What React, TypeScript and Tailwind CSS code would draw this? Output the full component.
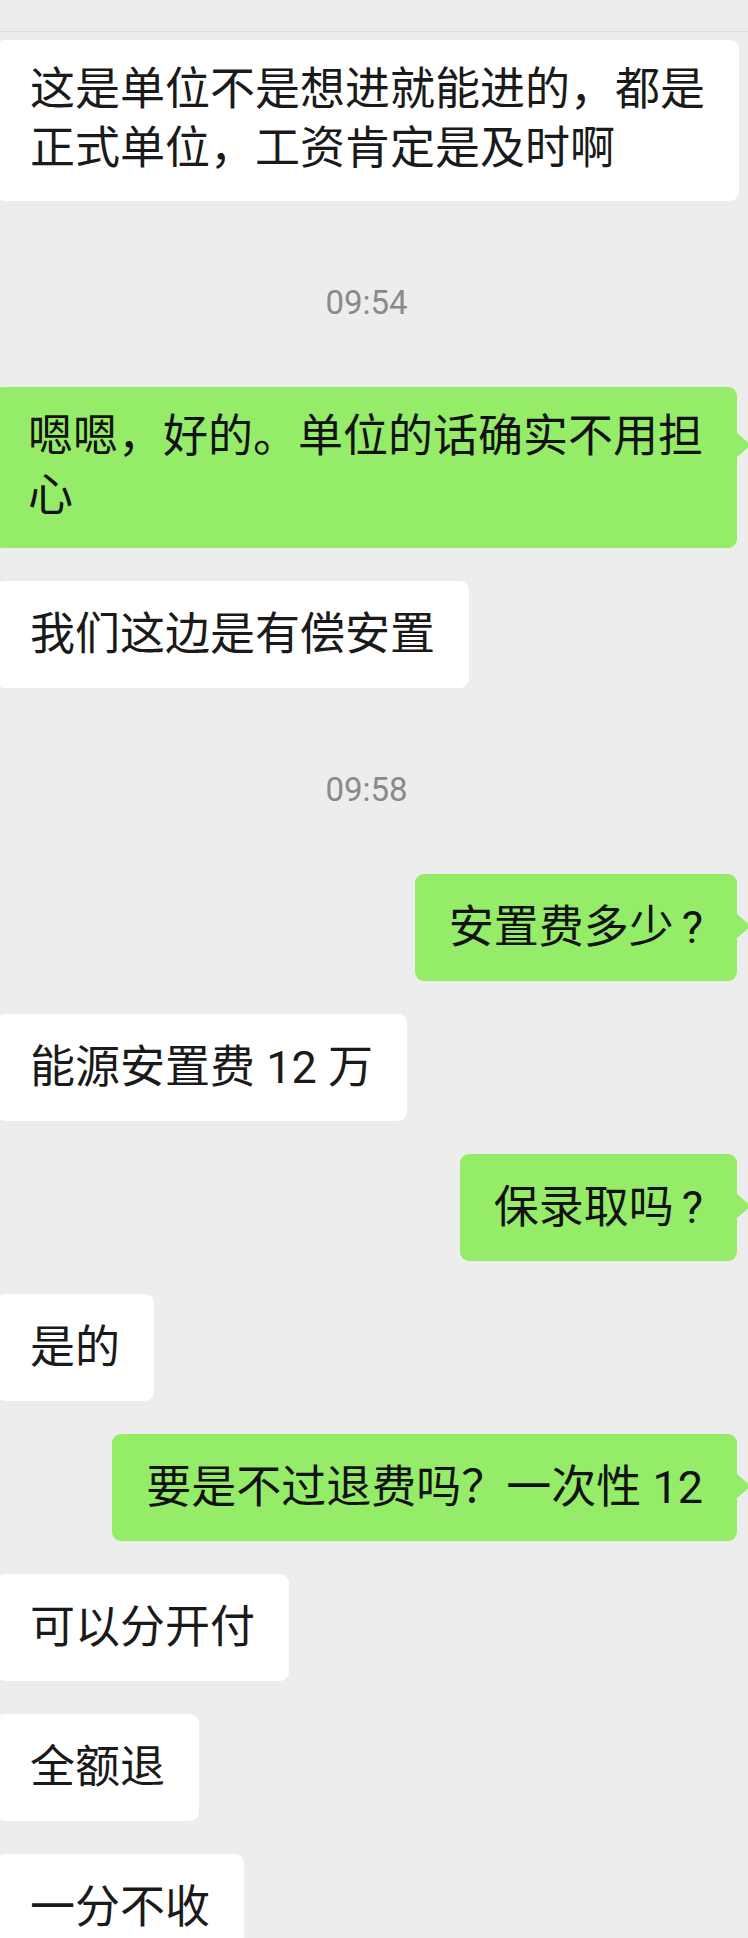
type Row =
  | { kind: "time"; text: string }
  | { kind: "in" | "out"; lines: string[]; tailTop?: string };

const rows: Row[] = [
  { kind: "in", lines: ["这是单位不是想进就能进的，都是", "正式单位，工资肯定是及时啊"] },
  { kind: "time", text: "09:54" },
  { kind: "out", lines: ["嗯嗯，好的。单位的话确实不用担", "心"], tailTop: "top-[46px]" },
  { kind: "in", lines: ["我们这边是有偿安置"] },
  { kind: "time", text: "09:58" },
  { kind: "out", lines: ["安置费多少?"] },
  { kind: "in", lines: ["能源安置费 12 万"] },
  { kind: "out", lines: ["保录取吗?"] },
  { kind: "in", lines: ["是的"] },
  { kind: "out", lines: ["要是不过退费吗？一次性 12"] },
  { kind: "in", lines: ["可以分开付"] },
  { kind: "in", lines: ["全额退"] },
  { kind: "in", lines: ["一分不收"] },
];

const textFont = "font-['Roboto','Noto_Sans_CJK_SC',sans-serif] text-[45px] leading-[59px]";

// trailing half-width "?" sits a little further out in the original font
function Line({ text }: { text: string }) {
  if (text.endsWith("?")) {
    return (
      <div className="whitespace-nowrap">
        {text.slice(0, -1)}
        <span className="ml-[8px]">?</span>
      </div>
    );
  }
  return <div className="whitespace-nowrap">{text}</div>;
}

function Bubble({ side, lines, tailTop }: { side: "in" | "out"; lines: string[]; tailTop?: string }) {
  const pad = lines.length > 1 ? "pt-[20px] pb-[23px]" : "py-[24px]";
  const body = lines.map((l) => <Line key={l} text={l} />);

  if (side === "in") {
    return (
      <div className="flex justify-start">
        <div className={`-ml-[4px] rounded-[9px] bg-white px-[34px] text-[#1a1a1a] ${pad} ${textFont}`}>
          {body}
        </div>
      </div>
    );
  }

  return (
    <div className="flex justify-end pr-[11px]">
      <div className={`relative rounded-[9px] bg-[#95ec69] px-[34px] text-[#121212] ${pad} ${textFont}`}>
        {body}
        <svg
          className={`absolute -right-[14px] ${tailTop ?? "top-[40px]"}`}
          width="14"
          height="24"
          viewBox="0 0 14 24"
        >
          <path d="M0 0 L14 12 L0 24 Z" fill="#95ec69" />
        </svg>
      </div>
    </div>
  );
}

export default function App() {
  return (
    <div className="h-[1938px] w-full overflow-hidden bg-[#ededed]">
      <div className="h-[32px] border-b border-[#dcdcdc]" />
      <div className="flex flex-col gap-[33px] pt-[8px]">
        {rows.map((r, i) =>
          r.kind === "time" ? (
            <div
              key={i}
              className="flex justify-center pr-[15px] pt-[52px] pb-[34px] font-['Roboto',sans-serif] text-[33px] leading-[34px] text-[#8a8a8a]"
            >
              {r.text}
            </div>
          ) : (
            <Bubble key={i} side={r.kind} lines={r.lines} tailTop={r.tailTop} />
          )
        )}
      </div>
    </div>
  );
}
